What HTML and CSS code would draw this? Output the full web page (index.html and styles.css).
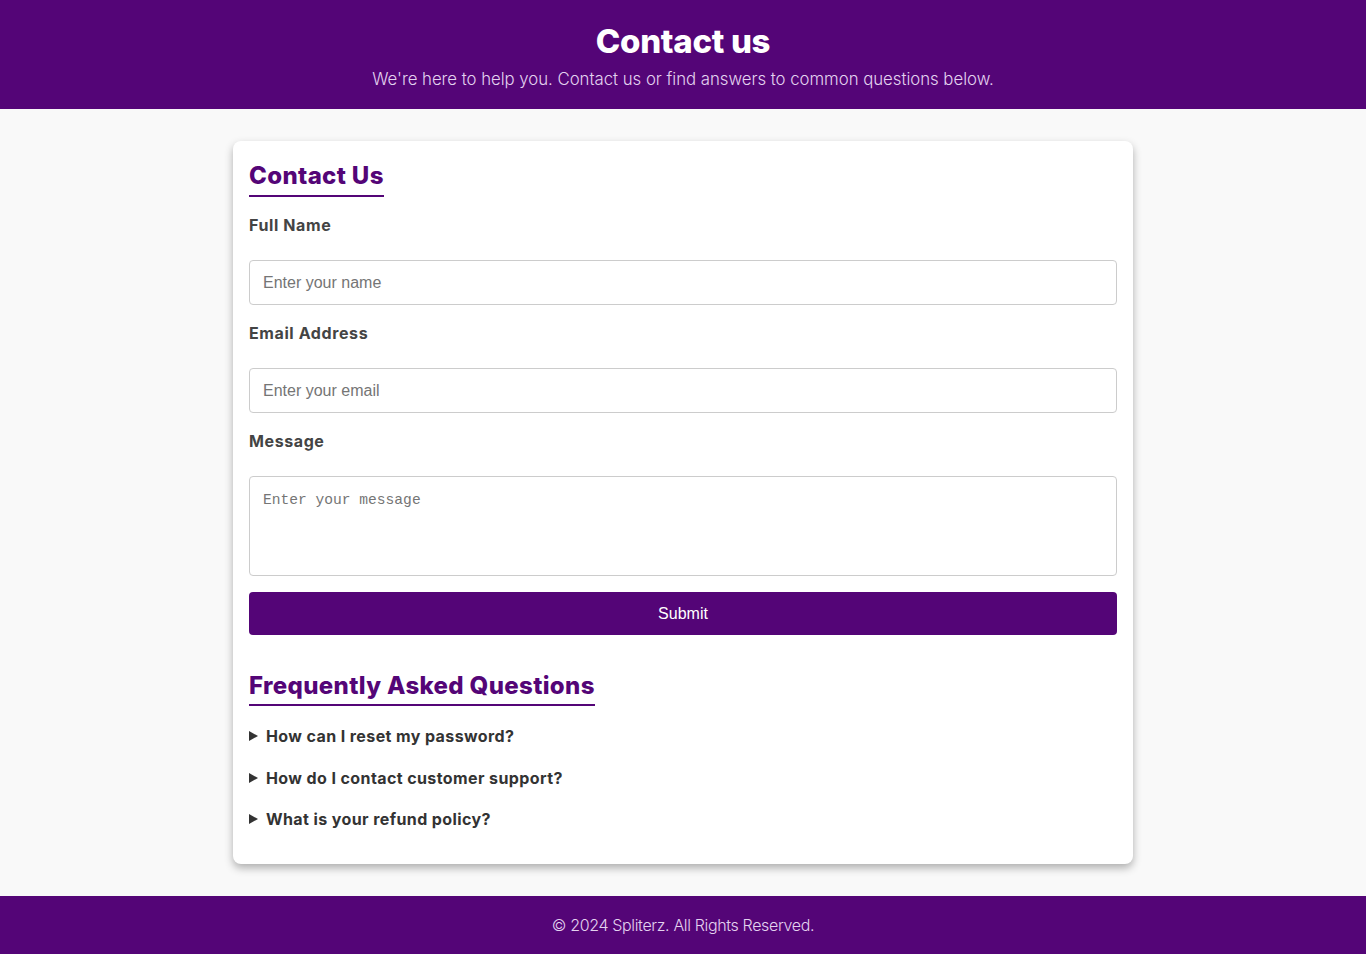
FILE: index.html
```html
<!DOCTYPE html>
<html lang="en">
<head>
<meta charset="utf-8">
<title>Contact us</title>
<link rel="stylesheet" href="styles.css">
</head>
<body>
<header class="site-header">
  <h1 class="site-title">Contact us</h1>
  <p class="site-sub">We're here to help you. Contact us or find answers to common questions below.</p>
</header>
<main class="main">
  <section class="card">
    <h2 class="section-title">Contact Us</h2>
    <form class="form">
      <label class="label" for="name">Full Name</label>
      <input class="field" id="name" type="text" placeholder="Enter your name">
      <label class="label" for="email">Email Address</label>
      <input class="field" id="email" type="email" placeholder="Enter your email">
      <label class="label" for="msg">Message</label>
      <textarea class="field area" id="msg" placeholder="Enter your message"></textarea>
      <button class="submit" type="button">Submit</button>
    </form>
    <h2 class="section-title faq-title">Frequently Asked Questions</h2>
    <div class="faq">
      <details class="faq-item"><summary>How can I reset my password?</summary></details>
      <details class="faq-item"><summary>How do I contact customer support?</summary></details>
      <details class="faq-item"><summary>What is your refund policy?</summary></details>
    </div>
  </section>
</main>
<footer class="site-footer">
  <p class="foot-text">© 2024 Spliterz. All Rights Reserved.</p>
</footer>
</body>
</html>
```
FILE: styles.css
```css
* { box-sizing: border-box; }
html, body { margin: 0; padding: 0; }
body {
  font-family: Inter, "Open Sans", "DejaVu Sans", sans-serif;
  background: #f9f9f9;
  color: #333;
}
.site-header {
  background: #540577;
  height: 109px;
  display: flex;
  flex-direction: column;
  align-items: center;
  padding-top: 21px;
}
.site-title {
  margin: 0;
  color: #fff;
  font-size: 33px;
  line-height: 40px;
  font-weight: 800;
  letter-spacing: -0.3px;
}
.site-sub {
  margin: 6px 0 0;
  color: #e3d2ef;
  font-size: 16.8px;
  line-height: 24px;
  font-weight: 300;
  letter-spacing: -0.03px;
}
.main {
  padding: 32px 0;
  display: flex;
  justify-content: center;
}
.card {
  width: 900px;
  background: #fff;
  border-radius: 8px;
  box-shadow: 0 4px 8px rgba(0,0,0,0.3);
  padding: 16px 16px 16px;
  display: flex;
  flex-direction: column;
  align-items: flex-start;
}
.section-title {
  margin: 0;
  color: #540577;
  font-size: 24px;
  line-height: 30px;
  font-weight: 800;
  padding: 4px 0 4px;
  border-bottom: 2px solid #540577;
  letter-spacing: 0.35px;
}
.form {
  width: 100%;
  display: flex;
  flex-direction: column;
}
.label {
  margin: 16px 0 23px;
  font-size: 16px;
  line-height: 24px;
  font-weight: 650;
  color: #444;
  letter-spacing: 0.6px;
}
.field {
  width: 100%;
  height: 45px;
  border: 1px solid #ccc;
  border-radius: 4px;
  padding: 12px 13px;
  font-family: "Liberation Sans", Arial, sans-serif;
  font-size: 16px;
  color: #333;
  background: #fff;
}
.field::placeholder { color: #757575; }
.area {
  height: 100px;
  resize: none;
  font-family: "Liberation Mono", "DejaVu Sans Mono", monospace;
  font-size: 14.6px;
  padding: 15px 13px 13px;
  display: block;
}
.submit {
  margin-top: 16px;
  height: 43px;
  width: 100%;
  border: none;
  border-radius: 4px;
  background: #540577;
  color: #fff;
  font-family: "Liberation Sans", Arial, sans-serif;
  font-size: 16px;
}
.faq-title {
  margin-top: 31px;
  padding-top: 5px;
  padding-bottom: 3px;
}
.faq {
  display: flex;
  flex-direction: column;
  margin-top: 18px;
  gap: 17.5px;
}
.faq-item summary {
  display: flex;
  align-items: center;
  list-style: none;
  font-size: 16px;
  line-height: 24px;
  font-weight: 700;
  color: #333;
  letter-spacing: 0.4px;
  cursor: pointer;
}
.faq-item summary::-webkit-details-marker { display: none; }
.faq-item summary::before {
  content: "";
  width: 0;
  height: 0;
  border-top: 5px solid transparent;
  border-bottom: 5px solid transparent;
  border-left: 9px solid #333;
  margin-right: 8px;
}
.faq-item:last-child { margin-bottom: 17px; }
.site-footer {
  background: #540577;
  height: 58px;
  display: flex;
  align-items: center;
  justify-content: center;
}
.foot-text {
  margin: 0;
  color: #e3d2ef;
  font-size: 16px;
  font-weight: 300;
  letter-spacing: -0.35px;
}
```
